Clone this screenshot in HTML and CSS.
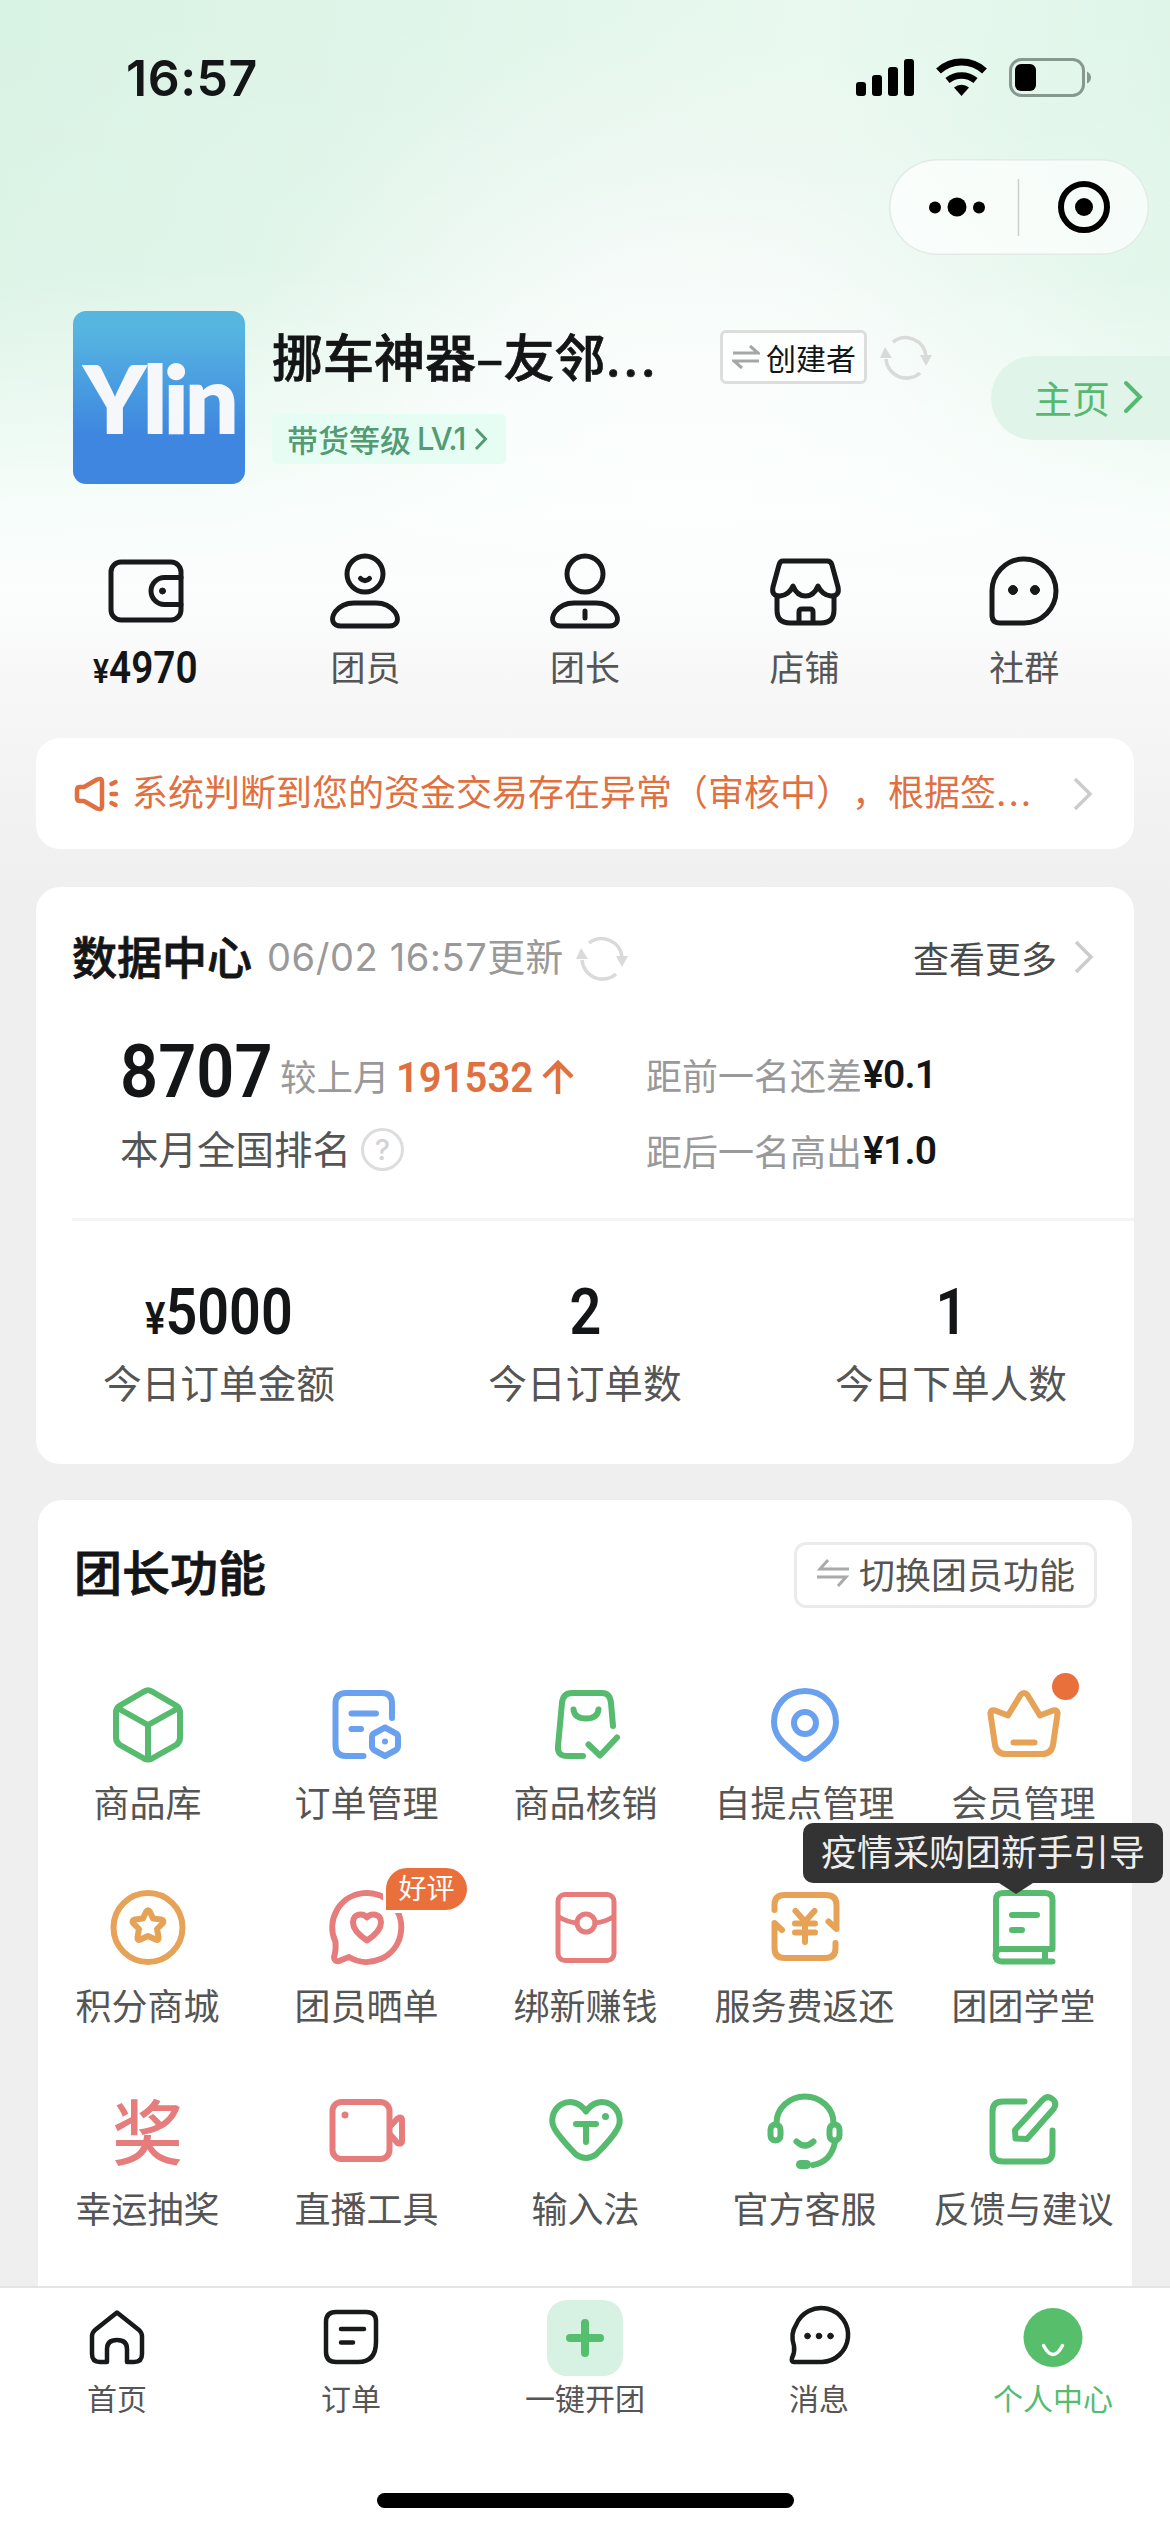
FILE: index.html
```html
<!DOCTYPE html>
<html lang="zh-CN">
<head>
<meta charset="utf-8">
<title>个人中心</title>
<link rel="stylesheet" href="styles.css">
</head>
<body>
<div class="page">
  <header class="status">
    <span class="clock">16:57</span>
    <svg class="status-icons" width="240" height="44" viewBox="0 0 240 44">
      <rect x="1" y="27" width="10" height="14" rx="3"/><rect x="17" y="20" width="10" height="21" rx="3"/><rect x="33" y="12" width="10" height="29" rx="3"/><rect x="49" y="4" width="10" height="37" rx="3"/>
      <path d="M106.500 41l-7.500-8.500a11.500 11.500 0 0 1 15 0z"/>
      <path d="M92.500 25.500a22 22 0 0 1 28 0" fill="none" stroke="#000" stroke-width="6.500"/>
      <path d="M83.500 16a34 34 0 0 1 46 0" fill="none" stroke="#000" stroke-width="7"/>
      <rect x="155.500" y="4.500" width="73" height="36" rx="11" fill="none" stroke="#87988f" stroke-width="3"/>
      <path d="M232 16.500q4 2 4 6t-4 6z" fill="#87988f"/>
      <rect x="160" y="9" width="21" height="27" rx="6"/>
    </svg>
  </header>
  <div class="capsule">
    <svg width="260" height="96" viewBox="0 0 260 96">
      <circle cx="46" cy="48.500" r="6"/><circle cx="68" cy="48" r="9.500"/><circle cx="90" cy="48.500" r="6"/>
      <path d="M129.500 20v57" stroke="#cbd0cd" stroke-width="1.500"/>
      <circle cx="195" cy="48" r="23" fill="none" stroke="#000" stroke-width="6"/><circle cx="195" cy="48" r="9"/>
    </svg>
  </div>

  <section class="profile">
    <div class="logo">Ylin</div>
    <div class="who">
      <div class="name-row">
        <h1 class="name">挪车神器–友邻<span class="dots">...</span></h1>
        <span class="role">
          <svg width="28" height="26" viewBox="0 0 28 26" fill="none" stroke="#a3a7a5" stroke-width="3"><path d="M1 9h25l-8-7M27 17H2l8 7"/></svg>
          创建者
        </span>
        <svg class="refresh" width="54" height="48" viewBox="0 0 54 48"><use href="#refresh"/></svg>
      </div>
      <span class="level">带货等级 <span class="lv">LV.1</span>
        <svg width="14" height="24" viewBox="0 0 14 24" fill="none" stroke="#549b74" stroke-width="3"><path d="M2 2l9.500 10L2 22"/></svg>
      </span>
    </div>
    <a class="home">主页
      <svg width="20" height="34" viewBox="0 0 20 34" fill="none" stroke="#55ba70" stroke-width="4" stroke-linecap="round"><path d="M3 3l14 14L3 31"/></svg>
    </a>
  </section>

  <nav class="quick">
    <div class="q"><svg viewBox="0 0 90 84"><rect x="10" y="12" width="70" height="58" rx="10"/><path d="M80 27.500H63.500a13.500 13.500 0 0 0 0 27H80"/><circle cx="61.500" cy="41" r="3" class="ink"/></svg><b class="cash"><i>¥</i>4970</b></div>
    <div class="q"><svg viewBox="0 0 90 84"><circle cx="45" cy="24" r="18"/><path d="M40.500 28.500q4.500 4.500 9 0"/><path d="M34 53h22q12 0 19 9c5 8 2 14-6 14H21c-8 0-11-6-6-14q7-9 19-9z"/></svg><span>团员</span></div>
    <div class="q"><svg viewBox="0 0 90 84"><circle cx="45" cy="24" r="18"/><path d="M45 61v7"/><path d="M34 53h22q12 0 19 9c5 8 2 14-6 14H21c-8 0-11-6-6-14q7-9 19-9z"/></svg><span>团长</span></div>
    <div class="q"><svg viewBox="0 0 90 84"><path d="M23 11h44q4 0 5 4l6 22q2 9-7 9-9-1-13-10-4 10-12.500 10T33 36q-4 9-13 10-9 0-7-9l6-22q1-4 4-4z"/><path d="M17 46v14q0 13 13 13h31q13 0 13-13V46M39 73V62q0-3 3-3h8q3 0 3 3v11"/></svg><span>店铺</span></div>
    <div class="q"><svg viewBox="0 0 90 84"><path d="M13 42a32 32 0 1 1 32 31H21q-8 0-8-8z"/><circle cx="34" cy="40" r="4.500" class="ink"/><circle cx="56" cy="40" r="4.500" class="ink"/></svg><span>社群</span></div>
  </nav>

  <section class="notice">
    <svg width="46" height="36" viewBox="0 0 46 36" fill="none" stroke="#e0703f" stroke-width="4.500" stroke-linejoin="round" stroke-linecap="round"><path d="M4 14q0-3 3-3h4L24 3.500q5-2 5 2.500v24q0 4.500-5 2.500L11 25H7q-3 0-3-3zM38.500 8l4-2M38.500 18h4.500M38.500 27l4 2"/></svg>
    <p>系统判断到您的资金交易存在异常（审核中），根据签<span class="dots">...</span></p>
    <svg class="more" width="20" height="36" viewBox="0 0 20 36"><path d="M2 3l15 15L2 33"/></svg>
  </section>

  <section class="data">
    <div class="data-head">
      <h2>数据中心</h2>
      <span class="updated"><span class="num">06/02 16:57</span>更新</span>
      <svg class="refresh" width="54" height="48" viewBox="0 0 54 48"><g id="refresh" fill="none" stroke="#d9dbda" stroke-width="3.500"><path d="M14 9a20.500 20.500 0 0 1 33 14M41 40a20.500 20.500 0 0 1-34-14"/><path d="M1 25l5-11 7 11zM41 22h12l-6 11z" fill="#d9dbda" stroke="none"/></g></svg>
      <a class="see">查看更多 <svg class="more" width="20" height="36" viewBox="0 0 20 36"><path d="M2 3l15 15L2 33"/></svg></a>
    </div>
    <div class="rank">
      <div class="rank-l">
        <div class="line"><b class="big">8707</b><span class="gray">较上月</span><b class="up">191532</b><svg width="34" height="36" viewBox="0 0 34 36" fill="none" stroke="#e0703f" stroke-width="4.500"><path d="M17 35V4M3 18L17 4l14 14"/></svg></div>
        <div class="line"><span class="month">本月全国排名</span><span class="ask">?</span></div>
      </div>
      <div class="rank-r">
        <div class="line"><span class="gray">距前一名还差</span><b>¥0.1</b></div>
        <div class="line"><span class="gray">距后一名高出</span><b>¥1.0</b></div>
      </div>
    </div>
    <div class="today">
      <div><b><i>¥</i>5000</b><span>今日订单金额</span></div>
      <div><b>2</b><span>今日订单数</span></div>
      <div><b>1</b><span>今日下单人数</span></div>
    </div>
  </section>

  <section class="tools">
    <div class="tools-head">
      <h2>团长功能</h2>
      <a class="switch"><svg width="34" height="30" viewBox="0 0 34 30" fill="none" stroke="#aaa" stroke-width="3"><path d="M33 11H4l8-9M1 19h29l-8 9"/></svg>切换团员功能</a>
    </div>
    <div class="grid">
      <div class="t green"><svg viewBox="0 0 90 90"><path d="M41 11.500q4-2.500 8 0l24 14q4 2.500 4 7v25q0 5-4 7.500l-24 13.500q-4 2-8 0L17 65q-4-2.500-4-7.500v-25q0-4.500 4-7zM14.500 28L45 45l30.500-17M45 45v34"/></svg><span>商品库</span></div>
      <div class="t blue"><svg viewBox="0 0 90 90"><path d="M41.500 76H24q-10.500 0-10.500-11V24q0-11 10.500-11h36q10 0 10 11v14M29.500 33.500H54M29.500 49H39"/><path d="M63 47.500l11 6q2 1 2 3.500v9q0 2.500-2 4l-11 6-11-6q-2-1.500-2-4v-9q0-2.500 2-3.500z"/><circle cx="63" cy="61.500" r="3" class="dot"/></svg><span>订单管理</span></div>
      <div class="t green"><svg viewBox="0 0 90 90"><path d="M42 76H26q-10 0-9-10l4-43q1-10 10-10h30q8 0 9 10l2 23M32.500 29.500q1 9 12.500 9t12.500-9M47.500 64.500L59 75.500l17-18"/></svg><span>商品核销</span></div>
      <div class="t blue"><svg viewBox="0 0 90 90"><path d="M45 11c18 0 31 14 31 31 0 16-13 24-26 35q-5 4-10 0C27 66 14 58 14 42c0-17 13-31 31-31z"/><circle cx="45" cy="43" r="11"/></svg><span>自提点管理</span></div>
      <div class="t orange"><svg viewBox="0 0 90 90"><path d="M29 35.500L41.500 15q3.500-4 7 0L61 35.500l13-5q5-1 4.500 3.500L74 65q-2 9-11 9H27q-9 0-11-9l-4.500-31q-.5-4.500 4.500-3.500zM34.500 62.500h21"/></svg><em class="red-dot"></em><span>会员管理</span></div>

      <div class="t orange"><svg viewBox="0 0 90 90"><circle cx="45" cy="44.500" r="34.500"/><path d="M43 29q2-3.500 4 0l3 6.500 8 1q4 1 1.500 4L54 46l1.500 8q.5 4-3 2.500L45 53l-7.500 3.500q-3.500 1.500-3-2.500l1.500-8-5.500-5.500q-2.500-3 1.500-4l8-1z"/></svg><span>积分商城</span></div>
      <div class="t red"><svg viewBox="0 0 90 90"><path d="M27 74q-5 2-10 4-5 1-5-4 2-5 1.500-15A34.500 34.500 0 1 1 27 74z"/><path d="M45 34.500c4-5 14-4 14 5 0 8-8 14-14 18-6-4-14-10-14-18 0-9 10-10 14-5z"/></svg><em class="praise">好评</em><span>团员晒单</span></div>
      <div class="t red"><svg viewBox="0 0 90 90" class="thin"><rect x="17" y="11.500" width="56" height="66" rx="7"/><circle cx="45" cy="40" r="9"/><path d="M18 34q8 5 18 6M72 34q-8 5-18 6"/></svg><span>绑新赚钱</span></div>
      <div class="t orange"><svg viewBox="0 0 90 90"><path d="M14.500 27V22q0-10 10-10h41q11 0 11 10v24L68.500 38.500M75.500 60v5q0 10-10 10h-41q-10 0-10-10V40l7.500 7"/><path d="M35.500 28L45 38.500 54.500 28M35 40.500h20M35 49.500h20M45 39v20"/></svg><span>服务费返还</span></div>
      <div class="t green"><svg viewBox="0 0 90 90"><path d="M73.500 66h-51q-6 0-6 6t6 6.500h51M17 71V17q0-7 7-7h42q7.500 0 7.500 7v49M33 32h25M33 47h10M66 67v11"/></svg>
        <span>团团学堂</span><em class="tip">疫情采购团新手引导</em></div>

      <div class="t red"><strong class="prize">奖</strong><span>幸运抽奖</span></div>
      <div class="t red"><svg viewBox="0 0 90 90"><rect x="10.500" y="16" width="57" height="57" rx="9"/><circle cx="23" cy="29" r="3.500" class="dot"/><path d="M68.500 40l7-7.500q4.500-2.500 4.500 2v20q0 4.500-4.500 2.500l-7-8"/></svg><span>直播工具</span></div>
      <div class="t green"><svg viewBox="0 0 90 90"><path d="M45 25.500c6-9 16-12 25-7 9 6 11 17 6 25-5 9-13 17-21 25q-10 7-20 0C27 60 19 52 14 43.500c-5-8-3-19 6-25 9-5 19-2 25 7zM35 38h20M45 39v17"/><circle cx="64.500" cy="30.500" r="3.500" class="dot"/></svg><span>输入法</span></div>
      <div class="t green"><svg viewBox="0 0 90 90"><path d="M16.500 37a28.500 26.500 0 0 1 57 0M75 56Q71 76 53 79"/><rect x="10.500" y="38.500" width="10" height="16" rx="5"/><rect x="69.500" y="38.500" width="10" height="16" rx="5"/><path d="M36.500 55.500q8.500 8 17 0"/><path d="M40.500 78.500h6" stroke-width="9"/></svg><span>官方客服</span></div>
      <div class="t green"><svg viewBox="0 0 90 90"><path d="M45.500 15.500H24q-10.500 0-10.500 10v40q0 10 10.500 10h39q10.500 0 10.500-10v-21M36 44L63.500 14q5-5 10-1t1 10L48 53l-11.500-.5z"/></svg><span>反馈与建议</span></div>
    </div>
  </section>

  <footer class="tabs">
    <div class="tab"><svg viewBox="0 0 76 76"><path d="M38 12.500L60 30q3 3 3 6v18q0 8-8 8h-7V49q0-9-10-9t-10 9v13h-7q-8 0-8-8V36q0-3 3-6z" /></svg><span>首页</span></div>
    <div class="tab"><svg viewBox="0 0 76 76"><path d="M23 12h30q10 0 10 9v21q0 20-18 20H23q-10 0-10-10V22q0-10 10-10zM28 29h23M28 42.500h12"/></svg><span>订单</span></div>
    <div class="tab"><svg class="plus" viewBox="0 0 76 76"><path d="M38 23v30M23 38h30"/></svg><span>一键开团</span></div>
    <div class="tab"><svg viewBox="0 0 76 76"><path d="M13 62q-3 0-2-4 3-6 2-12-4-12 2-21a27 27 0 1 1 26 37z"/><g class="ink"><circle cx="26.500" cy="36" r="2.800"/><circle cx="38" cy="36" r="2.800"/><circle cx="49.500" cy="36" r="2.800"/></g></svg><span>消息</span></div>
    <div class="tab on"><svg viewBox="0 0 76 76"><circle cx="38" cy="37.500" r="29.500" fill="#57bf6c" stroke="none"/><path d="M28.500 45.500q9.500 18 19 0" stroke="#fff" stroke-width="3.500"/></svg><span>个人中心</span></div>
  </footer>
  <div class="bar"></div>
</div>
</body>
</html>
```
FILE: styles.css
```css
* { box-sizing: border-box; margin: 0; padding: 0; }
body { width: 1170px; height: 2532px; overflow: hidden; background: #efefef; font-family: "Noto Sans CJK SC", sans-serif; color: #141516; text-spacing-trim: space-all; }
i, em { font-style: normal; }
svg { display: block; flex: none; }
.page {
  width: 1170px; height: 2532px; display: flex; flex-direction: column;
  background:
    linear-gradient(180deg, rgba(252,255,254,0) 0, rgba(252,255,254,.12) 270px, rgba(252,255,254,.55) 420px, rgba(252,255,254,.85) 510px, #fcfdfd 590px, #f8f8f8 670px, #f3f3f3 780px, #efefef 900px),
    radial-gradient(ellipse 470px 470px at 690px 480px, #fbfdfc 0, rgba(246,251,249,.9) 45%, rgba(240,248,244,.6) 70%, rgba(232,249,239,0) 100%),
    linear-gradient(97deg, #d8f2e3 0, #e0f5e9 28%, #e9f9ef 55%, #e1f6ea 75%, #d9f3e4 100%);
}
.status { height: 159px; display: flex; justify-content: space-between; padding: 55px 75px 0 126px; flex: none; }
.clock { font: 600 50px/46px Inter, sans-serif; letter-spacing: .5px; }
.capsule { flex: none; width: 260px; height: 96px; margin-left: 889px; border-radius: 48px; background: rgba(255,255,255,.68); box-shadow: inset 0 0 0 1.5px #e1eae5; }

.profile { flex: none; display: flex; height: 229px; padding: 56px 0 0 73px; }
.logo { width: 172px; height: 173px; border-radius: 13px; background: linear-gradient(#56b6e0 10%, #3e86e0 72%); color: #f5f7fb; font: 800 95px/173px Lato, sans-serif; text-align: center; letter-spacing: -4px; text-indent: 0; }
.who { width: 746px; padding: 19px 0 0 27px; }
.name-row { display: flex; align-items: center; height: 54px; }
.name { width: 448px; font-size: 51px; line-height: 54px; font-weight: 500; white-space: nowrap; -webkit-text-stroke: .7px; }
.dots { font-family: Inter, sans-serif; letter-spacing: 2px; }
.role { width: 147px; height: 54px; border: 3px solid #dcdedd; border-radius: 6px; background: #fdfffe; display: flex; align-items: center; padding-left: 9px; gap: 6px; font-size: 30px; line-height: 46px; white-space: nowrap; }
.refresh { margin-left: 12px; }
.level { display: flex; align-items: center; width: 234px; height: 50px; margin-top: 30px; padding-left: 15px; background: #e6fdf4; border-radius: 5px; color: #549b74; font-size: 31px; line-height: 46px; white-space: pre; font-weight: 500; }
.lv { font: 500 31px/46px Inter, sans-serif; letter-spacing: -1.5px; margin: 0 9px 0 -1px; }
.home { width: 179px; height: 84px; margin-top: 45px; border-radius: 42px 0 0 42px; background: #e0f4e9; color: #55ba70; font-size: 38px; line-height: 78px; display: flex; align-items: center; padding: 0 0 2px 43px; gap: 13px; }

.quick { flex: none; display: grid; grid-template-columns: repeat(5, 1fr); margin: 0 36px; height: 194px; padding-top: 66px; }
.q { display: flex; flex-direction: column; align-items: center; font-size: 35px; line-height: 50px; color: #555; }
.q svg { width: 90px; height: 84px; fill: none; stroke: #17191a; stroke-width: 5; stroke-linejoin: round; stroke-linecap: round; }
.q svg .ink, .tab .ink { fill: #17191a; stroke: #17191a; stroke-width: 1; }
.q span, .cash { margin-top: 7px; }
.cash { color: #141516; font: 600 44px/54px Roboto, sans-serif; transform: scaleX(.88); }
.cash i { font-size: 34px; }

.notice, .data { background: #fff; border-radius: 24px; margin: 0 36px; flex: none; }
.notice { height: 111px; margin-top: 60px; display: flex; align-items: center; padding: 0 40px 0 37px; color: #e0703f; }
.notice p { width: 941px; margin-left: 13px; font-size: 36px; line-height: 50px; white-space: nowrap; padding-bottom: 4px; }
.more { fill: none; stroke: #ccc; stroke-width: 3.500; }

.data { height: 577px; margin-top: 38px; }
.data-head { display: flex; align-items: center; height: 146px; padding: 0 40px 4px 36px; }
h2 { font-weight: 500; font-size: 45px; line-height: 60px; padding-bottom: 4px; -webkit-text-stroke: .8px; }
.updated { margin-left: 15px; font-size: 38px; line-height: 50px; color: #999; white-space: nowrap; padding-bottom: 4px; }
.updated .num { font-family: Inter, sans-serif; letter-spacing: .6px; }
.see { margin-left: auto; display: flex; align-items: center; gap: 17px; font-size: 36px; line-height: 46px; color: #4a4a4a; padding-bottom: 2px; }
.rank { display: flex; height: 188px; margin-left: 36px; border-bottom: 3px solid #f4f4f4; padding-left: 48px; }
.rank-l { width: 526px; }
.line { display: flex; align-items: center; height: 76px; white-space: nowrap; }
.big { width: 152px; font: 600 75px/74px Roboto, sans-serif; transform: scaleX(.89); transform-origin: left; margin-right: 8px; }
.gray { font-size: 36px; color: #999; }
.rank-l .gray { margin-top: 8px; font-size: 36.500px; }
.up { width: 134px; font: 600 43px/50px Roboto, sans-serif; color: #e0703f; transform: scaleX(.93); transform-origin: left; margin: 12px 11px 0 6px; }
.line svg { margin-top: 11px; }
.month { font-size: 38.500px; color: #555; }
.ask { width: 43px; height: 43px; border: 3px solid #ddd; border-radius: 50%; color: #d3d3d3; font: 500 29px/37px Inter, sans-serif; text-align: center; margin-left: 10px; margin-top: 4px; }
.rank-r { padding-top: 3px; }
.rank-r b { font: 600 39px/50px Roboto, sans-serif; margin-left: 1px; margin-top: 2px; letter-spacing: -.8px; }
.today { display: grid; grid-template-columns: repeat(3, 1fr); padding-top: 60px; }
.today div { display: flex; flex-direction: column; align-items: center; }
.today b { height: 64px; font: 600 64px/64px Roboto, sans-serif; transform: scaleX(.87); }
.today i { font-size: 44px; line-height: 0; }
.today span { font-size: 38.700px; line-height: 56px; color: #555; margin-top: 8px; }

.tools { flex: none; height: 786px; margin: 36px 38px 0; background: #fff; border-radius: 24px 24px 0 0; }
.tools-head { display: flex; justify-content: space-between; height: 180px; padding: 42px 35px 0 36px; }
.tools-head h2 { font-size: 48px; margin-top: -2px; }
.switch { width: 303px; height: 66px; border: 3px solid #ebebeb; border-radius: 12px; display: flex; align-items: center; gap: 9px; padding: 0 0 4px 19px; color: #555; font-size: 36px; line-height: 50px; white-space: nowrap; }
.grid { display: grid; grid-template-columns: repeat(5, 219px); grid-auto-rows: 203px; }
.t { position: relative; display: flex; flex-direction: column; align-items: center; }
.t svg, .prize { width: 90px; height: 90px; }
.t svg { fill: none; stroke: currentColor; stroke-width: 6; stroke-linejoin: round; stroke-linecap: round; }
.t svg.thin { stroke-width: 5; }
.t .dot { fill: currentColor; stroke: none; }
.t span { font-size: 36px; line-height: 50px; color: #555; margin-top: 6px; white-space: nowrap; }
.green { color: #56bb6f; }
.blue { color: #6aa1ee; }
.orange { color: #e6a256; }
.red { color: #e67c7b; }
.prize { font-size: 71px; line-height: 84px; text-align: center; font-weight: 500; }
.red-dot { position: absolute; left: 138px; top: -7px; width: 27px; height: 27px; border-radius: 50%; background: #e96f3b; }
.praise { position: absolute; left: 126px; top: -18px; width: 87px; height: 48px; border: 3px solid #fff; border-radius: 24px 24px 24px 0; background: #e96f3b; color: #fff; font-size: 28px; line-height: 38px; text-align: center; }
.tip { position: absolute; top: -60px; right: -30px; width: 360px; height: 60px; border-radius: 10px; background: #333; color: #eee; font-size: 36px; line-height: 54px; text-align: center; white-space: nowrap; }
.tip::after { content: ""; position: absolute; left: 196px; top: 60px; border: 17px solid transparent; border-top: 11px solid #333; border-bottom: 0; }

.tabs { flex: none; height: 207px; background: #fff; border-top: 2px solid #e4e4e4; display: grid; grid-template-columns: repeat(5, 1fr); padding-top: 12px; }
.tab { display: flex; flex-direction: column; align-items: center; font-size: 30px; line-height: 40px; color: #555; }
.tab svg { width: 76px; height: 76px; fill: none; stroke: #17191a; stroke-width: 4.500; stroke-linejoin: round; stroke-linecap: round; }
.tab span { margin-top: 1px; }
.tab .plus { background: #d7f1e3; border-radius: 20px; stroke: #56bf6d; stroke-width: 8; }
.tab.on { color: #56bb6f; }
.bar { flex: 1; background: #fff; }
.bar::before { content: ""; display: block; width: 417px; height: 15px; margin: 0 auto; border-radius: 8px; background: #000; }
```
